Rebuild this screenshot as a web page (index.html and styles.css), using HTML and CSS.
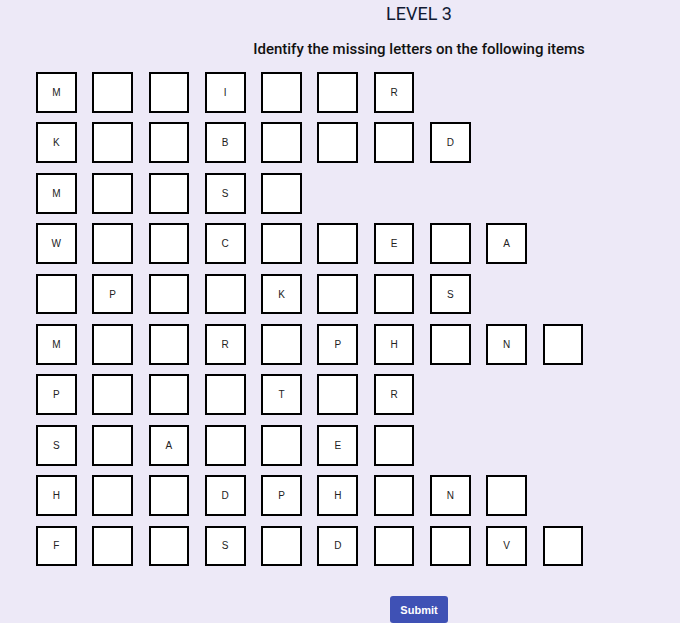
FILE: index.html
```html
<!DOCTYPE html>
<html>
<head>
<meta charset="utf-8">
<link rel="stylesheet" href="styles.css">
</head>
<body>
<div class="header">
  <h1 class="title">LEVEL 3</h1>
  <p class="subtitle">Identify the missing letters on the following items</p>
</div>
<div class="grid">
  <div class="row"><div class="box">M</div><div class="box"></div><div class="box"></div><div class="box">I</div><div class="box"></div><div class="box"></div><div class="box">R</div></div>
  <div class="row"><div class="box">K</div><div class="box"></div><div class="box"></div><div class="box">B</div><div class="box"></div><div class="box"></div><div class="box"></div><div class="box">D</div></div>
  <div class="row"><div class="box">M</div><div class="box"></div><div class="box"></div><div class="box">S</div><div class="box"></div></div>
  <div class="row"><div class="box">W</div><div class="box"></div><div class="box"></div><div class="box">C</div><div class="box"></div><div class="box"></div><div class="box">E</div><div class="box"></div><div class="box">A</div></div>
  <div class="row"><div class="box"></div><div class="box">P</div><div class="box"></div><div class="box"></div><div class="box">K</div><div class="box"></div><div class="box"></div><div class="box">S</div></div>
  <div class="row"><div class="box">M</div><div class="box"></div><div class="box"></div><div class="box">R</div><div class="box"></div><div class="box">P</div><div class="box">H</div><div class="box"></div><div class="box">N</div><div class="box"></div></div>
  <div class="row"><div class="box">P</div><div class="box"></div><div class="box"></div><div class="box"></div><div class="box">T</div><div class="box"></div><div class="box">R</div></div>
  <div class="row"><div class="box">S</div><div class="box"></div><div class="box">A</div><div class="box"></div><div class="box"></div><div class="box">E</div><div class="box"></div></div>
  <div class="row"><div class="box">H</div><div class="box"></div><div class="box"></div><div class="box">D</div><div class="box">P</div><div class="box">H</div><div class="box"></div><div class="box">N</div><div class="box"></div></div>
  <div class="row"><div class="box">F</div><div class="box"></div><div class="box"></div><div class="box">S</div><div class="box"></div><div class="box">D</div><div class="box"></div><div class="box"></div><div class="box">V</div><div class="box"></div></div>
</div>
<div class="actions">
  <button class="submit" type="button">Submit</button>
</div>
</body>
</html>
```

FILE: styles.css
```css
html, body {
  margin: 0;
  padding: 0;
}
body {
  background: #ede9f7;
  font-family: Roboto, "Liberation Sans", sans-serif;
  color: #111827;
  height: 623px;
  overflow: hidden;
}
.header {
  padding-left: 158px;
  text-align: center;
}
.title {
  margin: 0;
  padding-top: 3px;
  font-size: 18px;
  line-height: 21px;
  font-weight: 400;
  color: #111a33;
}
.subtitle {
  margin: 16px 0 0;
  font-size: 15px;
  line-height: 18px;
  font-weight: 500;
  color: #111;
}
.grid {
  margin-top: 14px;
  padding-left: 36px;
  display: flex;
  flex-direction: column;
  gap: 9.5px;
}
.row {
  display: flex;
  gap: 15.6px;
}
.box {
  box-sizing: border-box;
  width: 40.7px;
  height: 40.9px;
  border: 2px solid #000;
  background: #fff;
  display: flex;
  align-items: center;
  justify-content: center;
  font-family: "Liberation Sans", Arial, sans-serif;
  font-size: 10px;
  color: #222;
}
.actions {
  margin-top: 30px;
  padding-left: 390px;
}
.submit {
  width: 58px;
  height: 27px;
  border: none;
  border-radius: 3px;
  background: #3f51b5;
  color: #fff;
  font-family: "Liberation Sans", Arial, sans-serif;
  font-weight: 700;
  font-size: 11px;
  padding: 0;
}
```
